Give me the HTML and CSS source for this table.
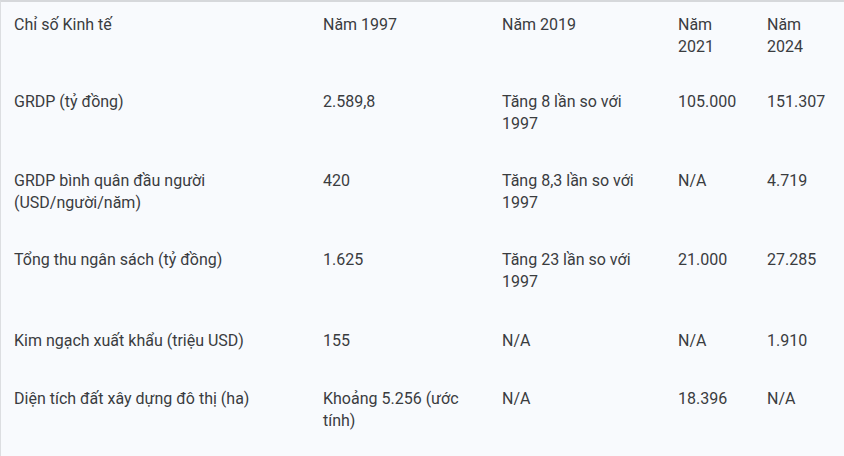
FILE: index.html
```html
<!DOCTYPE html>
<html lang="vi">
<head>
<meta charset="utf-8">
<title>Chỉ số Kinh tế</title>
<link rel="stylesheet" href="styles.css">
</head>
<body>
<div class="wrap">
<table class="data">
<colgroup>
<col class="c1"><col class="c2"><col class="c3"><col class="c4"><col class="c5">
</colgroup>
<thead>
<tr><th>Chỉ số Kinh tế</th><th>Năm 1997</th><th>Năm 2019</th><th>Năm 2021</th><th>Năm 2024</th></tr>
</thead>
<tbody>
<tr><td>GRDP (tỷ đồng)</td><td>2.589,8</td><td>Tăng 8 lần so với 1997</td><td>105.000</td><td>151.307</td></tr>
<tr><td>GRDP bình quân đầu người (USD/người/năm)</td><td>420</td><td>Tăng 8,3 lần so với 1997</td><td>N/A</td><td>4.719</td></tr>
<tr><td>Tổng thu ngân sách (tỷ đồng)</td><td>1.625</td><td>Tăng 23 lần so với 1997</td><td>21.000</td><td>27.285</td></tr>
<tr class="single"><td>Kim ngạch xuất khẩu (triệu USD)</td><td>155</td><td>N/A</td><td>N/A</td><td>1.910</td></tr>
<tr><td>Diện tích đất xây dựng đô thị (ha)</td><td>Khoảng 5.256 (ước tính)</td><td>N/A</td><td>18.396</td><td>N/A</td></tr>
</tbody>
</table>
</div>
</body>
</html>
```
FILE: styles.css
```css
html, body {
  margin: 0;
  padding: 0;
  background: #f8fafd;
}
.wrap {
  width: 844px;
  height: 456px;
  box-sizing: border-box;
  border-top: 2px solid #d6d8db;
  border-left: 1px solid #dcdee1;
  background: #f8fafd;
  overflow: hidden;
}
.data {
  border-collapse: collapse;
  table-layout: fixed;
  width: 843px;
  font-family: Roboto, "Noto Sans", sans-serif;
  font-size: 16px;
  line-height: 22px;
  color: #3a3c3f;
}
.c1 { width: 307px; }
.c2 { width: 179px; }
.c3 { width: 176px; }
.c4 { width: 89px; }
.c5 { width: 92px; }
.data th {
  font-weight: 400;
  text-align: left;
  vertical-align: top;
  padding: 12px 15px 15px;
}
.data td {
  text-align: left;
  vertical-align: top;
  padding: 18px 15px 17px;
}
.data th:first-child,
.data td:first-child {
  padding-left: 13px;
}
.data tr.single td {
  padding-top: 20px;
  padding-bottom: 18px;
}
```
